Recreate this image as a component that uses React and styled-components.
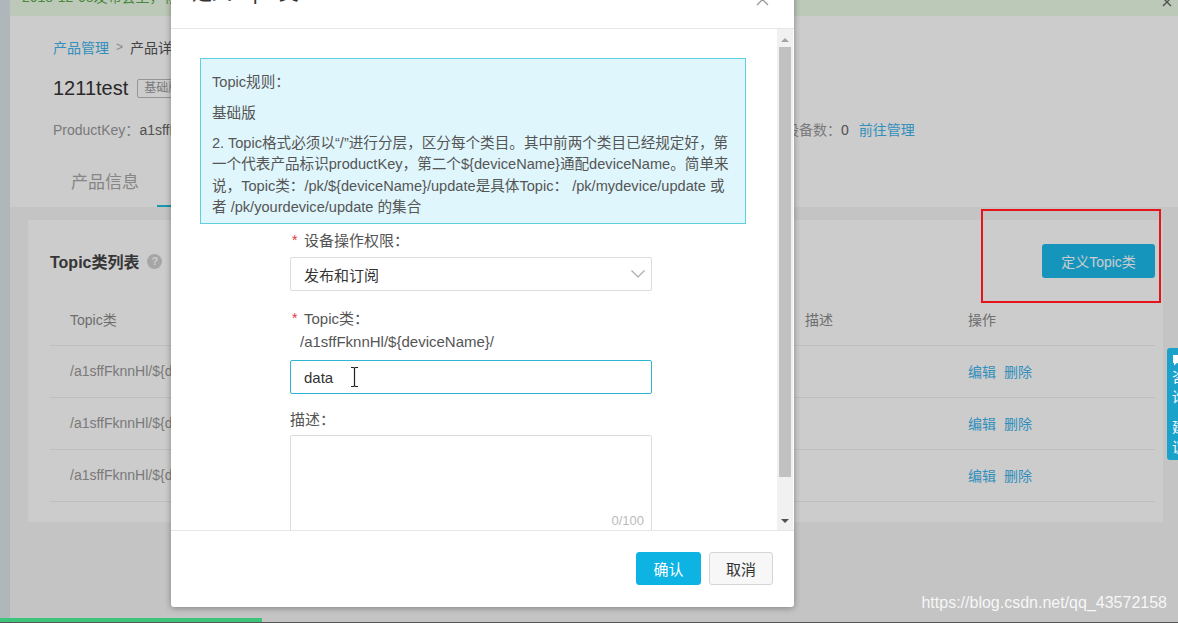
import React from "react";
import styled, { createGlobalStyle } from "styled-components";

const GlobalStyle = createGlobalStyle`
  html, body {
    margin: 0;
    padding: 0;
    height: 100%;
    overflow: hidden;
  }
  body {
    font-family: "Liberation Sans", "Noto Sans CJK SC", sans-serif;
    background: #f5f5f5;
    color: #333;
  }
  #root {
    height: 100%;
  }
  * {
    box-sizing: border-box;
  }
`;

const LINK = "#40b4ec";

/* ---------- page behind the dialog ---------- */

const Screen = styled.div`
  position: relative;
  display: flex;
  height: 100vh;
  overflow: hidden;
`;

const Sidebar = styled.div`
  width: 10px;
  flex: none;
  background: #dde5e9;
`;

const Main = styled.div`
  flex: 1;
  display: flex;
  flex-direction: column;
  min-width: 0;
`;

const Notice = styled.div`
  height: 16px;
  flex: none;
  display: flex;
  align-items: flex-end;
  justify-content: space-between;
  overflow: hidden;
  padding: 0 6px 0 12px;
  background: #ebfbe6;
  color: #5caa4c;
  font-size: 14px;
  span {
    line-height: 20px;
    margin-bottom: 9px;
  }
  svg {
    margin-bottom: 9px;
  }
`;

const Header = styled.div`
  background: #fff;
  padding: 21px 0 0 43px;
`;

const Breadcrumb = styled.div`
  display: flex;
  align-items: center;
  gap: 7px;
  height: 20px;
  font-size: 14px;
  color: #555;
`;

const Crumb = styled.span`
  color: ${({ $link }) => ($link ? LINK : "#555")};
`;

const Sep = styled.span`
  color: #aaa;
  font-size: 12px;
`;

const TitleRow = styled.div`
  display: flex;
  align-items: center;
  height: 28px;
  margin-top: 17px;
`;

const Title = styled.h1`
  margin: 0;
  font-size: 20px;
  font-weight: normal;
  color: #333;
`;

const Tag = styled.span`
  margin-left: 9px;
  height: 19px;
  line-height: 17px;
  padding: 0 6px;
  border: 1px solid #bbb;
  border-radius: 2px;
  color: #999;
  font-size: 12px;
`;

const MetaRow = styled.div`
  display: flex;
  height: 20px;
  margin-top: 18px;
  font-size: 14px;
  line-height: 20px;
`;

const MetaItem = styled.div`
  width: 366px;
  flex: none;
  color: #999;
  white-space: nowrap;
`;

const MetaValue = styled.span`
  color: #666;
`;

const MetaLink = styled.span`
  margin-left: 10px;
  color: ${LINK};
`;

const Tabs = styled.div`
  display: flex;
  height: 52px;
  margin-top: 15px;
`;

const Tab = styled.div`
  padding: 0 18px;
  display: flex;
  align-items: center;
  font-size: 17px;
  color: ${({ $active }) => ($active ? "#00c1de" : "#a8a8a8")};
  border-bottom: 2px solid ${({ $active }) => ($active ? "#1fc0d8" : "transparent")};
`;

const Content = styled.div`
  flex: 1;
  padding: 13px 15px 0 18px;
`;

const Card = styled.div`
  background: #fff;
  padding: 24px 8px 20px 22px;
`;

const CardHead = styled.div`
  display: flex;
  align-items: center;
  justify-content: space-between;
  height: 34px;
`;

const CardTitle = styled.div`
  display: flex;
  align-items: center;
  gap: 8px;
  font-size: 16px;
  font-weight: bold;
  color: #444;
`;

const Help = styled.span`
  width: 15px;
  height: 15px;
  border-radius: 50%;
  background: #d0d0d0;
  color: #fff;
  font-size: 11px;
  line-height: 15px;
  text-align: center;
`;

const PrimaryButton = styled.button`
  width: 113px;
  height: 34px;
  border: none;
  border-radius: 3px;
  background: #1bbbec;
  color: #fff;
  font-family: inherit;
  font-size: 14px;
`;

const Table = styled.div`
  margin-top: 16px;
`;

const Row = styled.div`
  display: grid;
  grid-template-columns: 735px 163px 1fr;
  align-items: center;
  height: 52px;
  padding-bottom: 2px;
  border-bottom: 1px solid #eee;
  font-size: 14px;
  color: ${({ $head }) => ($head ? "#8a8a8a" : "#999")};
`;

const Cell = styled.div`
  padding-left: 20px;
  white-space: nowrap;
  overflow: hidden;
`;

const Ops = styled.div`
  display: flex;
  gap: 8px;
  padding-left: 20px;
  color: ${LINK};
`;

const Mask = styled.div`
  position: absolute;
  inset: 0;
  background: rgba(0, 0, 0, 0.2);
`;

/* ---------- dialog ---------- */

const Modal = styled.div`
  position: absolute;
  left: 171px;
  top: -22px;
  width: 623px;
  background: #fff;
  border-radius: 3px;
  box-shadow: 0 1px 6px rgba(0, 0, 0, 0.35);
  color: #555;
  font-size: 15px;
`;

const ModalHead = styled.div`
  display: flex;
  justify-content: space-between;
  align-items: flex-start;
  height: 51px;
  padding: 0 25px 0 21px;
  border-bottom: 1px solid #e6e6e6;
`;

const ModalTitle = styled.div`
  margin-top: 1px;
  font-size: 20px;
  line-height: 28px;
  color: #333;
`;

const Close = styled.svg`
  margin-top: 15px;
`;

const ModalBody = styled.div`
  display: flex;
  height: 501px;
`;

const BodyScroll = styled.div`
  flex: 1;
  overflow: hidden;
  padding: 29px 31px 0 29px;
`;

const InfoBox = styled.div`
  border: 1px solid #5dcfe0;
  background: #dff6fc;
  padding: 13px 11px 5px;
  color: #555;
  font-size: 14.6px;
  line-height: 21px;
  p {
    margin: 0 0 10px;
    white-space: nowrap;
  }
  p:nth-child(2) {
    margin-bottom: 9px;
  }
  p:last-child {
    margin: 0;
    line-height: 21.3px;
  }
`;

const ScrollBar = styled.div`
  width: 16px;
  flex: none;
  display: flex;
  flex-direction: column;
  align-items: center;
  background: #f1f1f1;
  margin-right: 1px;
`;

const ArrowBox = styled.div`
  height: 18px;
  flex: none;
  display: flex;
  justify-content: center;
  align-items: ${({ $down }) => ($down ? "flex-end" : "flex-start")};
  padding: ${({ $down }) => ($down ? "0 0 7px" : "9px 0 0")};
  &::after {
    content: "";
    border-left: 4px solid transparent;
    border-right: 4px solid transparent;
    ${({ $down }) =>
      $down ? "border-top: 4px solid #505050;" : "border-bottom: 4px solid #a3a3a3;"}
  }
`;

const Thumb = styled.div`
  width: 12px;
  height: 430px;
  background: #c1c1c1;
`;

const Filler = styled.div`
  flex: 1;
`;

const Form = styled.div`
  width: 362px;
  margin: 6px 0 0 90px;
`;

const FormItem = styled.div`
  margin-bottom: ${({ $mb }) => $mb}px;
`;

const Label = styled.div`
  display: flex;
  line-height: 21px;
  margin-bottom: ${({ $mb }) => $mb}px;
  color: #555;
`;

const Star = styled.span`
  width: 14px;
  padding-left: 2px;
  color: #e5343b;
  font-size: 14px;
`;

const SelectBox = styled.div`
  display: flex;
  align-items: center;
  justify-content: space-between;
  height: 34px;
  padding: 0 5px 0 13px;
  border: 1px solid #dcdcdc;
  border-radius: 2px;
  color: #333;
`;

const PathText = styled.div`
  margin: 2px 0 0 10px;
  line-height: 21px;
  color: #555;
`;

const InputWrap = styled.div`
  position: relative;
  margin-top: 8px;
`;

const Input = styled.input`
  display: block;
  width: 100%;
  height: 34px;
  padding: 0 13px;
  border: 1px solid #2db7d5;
  border-radius: 2px;
  outline: none;
  font-family: inherit;
  font-size: 15px;
  color: #333;
`;

const Caret = styled.svg`
  position: absolute;
  left: 60px;
  top: 6px;
`;

const AreaWrap = styled.div`
  position: relative;
`;

const TextArea = styled.textarea`
  display: block;
  width: 100%;
  height: 100px;
  border: 1px solid #dcdcdc;
  border-radius: 2px;
  resize: none;
  outline: none;
`;

const Counter = styled.span`
  position: absolute;
  right: 8px;
  bottom: 7px;
  font-size: 13px;
  color: #bbb;
`;

const ModalFoot = styled.div`
  display: flex;
  justify-content: flex-end;
  gap: 8px;
  padding: 21px 21px 22px;
  border-top: 1px solid #e6e6e6;
`;

const DialogButton = styled.button`
  width: ${({ $w }) => $w}px;
  height: 33px;
  border-radius: 3px;
  font-family: inherit;
  font-size: 15px;
  border: 1px solid ${({ $primary }) => ($primary ? "#0cb3e3" : "#d5d5d5")};
  background: ${({ $primary }) => ($primary ? "#0cb3e3" : "#f7f7f7")};
  color: ${({ $primary }) => ($primary ? "#fff" : "#333")};
`;

/* ---------- things laid over the capture ---------- */

const Annotation = styled.div`
  position: absolute;
  left: 981px;
  top: 209px;
  width: 180px;
  height: 94px;
  border: 2px solid #e5141b;
`;

const FloatTab = styled.div`
  position: absolute;
  left: 1167px;
  top: 348px;
  width: 30px;
  height: 112px;
  padding: 6px 0 0 5px;
  display: flex;
  flex-direction: column;
  gap: 2px;
  border-radius: 3px 0 0 3px;
  background: #1ba2cb;
  color: #fff;
  font-size: 14px;
  line-height: 18px;
  span:nth-of-type(3) {
    margin-top: 10px;
  }
`;

const Watermark = styled.div`
  position: absolute;
  right: 11px;
  top: 593px;
  font-size: 16px;
  line-height: 20px;
  color: rgba(255, 255, 255, 0.88);
`;

const Player = styled.div`
  position: absolute;
  left: 0;
  right: 0;
  bottom: 0;
`;

const Progress = styled.div`
  width: 262px;
  height: 4px;
  background: #3ec47a;
`;

const BaseLine = styled.div`
  height: 1px;
  background: #555;
`;

const info = [
  "2. Topic格式必须以“/”进行分层，区分每个类目。其中前两个类目已经规定好，第",
  "一个代表产品标识productKey，第二个${deviceName}通配deviceName。简单来",
  "说，Topic类：/pk/${deviceName}/update是具体Topic： /pk/mydevice/update 或",
  "者 /pk/yourdevice/update 的集合"
];

const rows = [
  "/a1sffFknnHl/${deviceName}/user/update",
  "/a1sffFknnHl/${deviceName}/user/update/error",
  "/a1sffFknnHl/${deviceName}/user/get"
];

const App = () => (
  <Screen>
    <GlobalStyle />
    <Sidebar />
    <Main>
      <Notice>
        <span>2018-12-08发布会上，物联网平台全新升级，欢迎体验</span>
        <svg width="10" height="10" viewBox="0 0 10 10">
          <path d="M1 1L9 9M9 1L1 9" stroke="#666" strokeWidth="1.4" />
        </svg>
      </Notice>
      <Header>
        <Breadcrumb>
          <Crumb $link>产品管理</Crumb>
          <Sep>&gt;</Sep>
          <Crumb>产品详情</Crumb>
        </Breadcrumb>
        <TitleRow>
          <Title>1211test</Title>
          <Tag>基础版</Tag>
        </TitleRow>
        <MetaRow>
          <MetaItem>
            ProductKey：<MetaValue>a1sffFknnHl</MetaValue>
            <MetaLink>复制</MetaLink>
          </MetaItem>
          <MetaItem>
            ProductSecret：<MetaValue>********</MetaValue>
            <MetaLink>查看</MetaLink>
          </MetaItem>
          <MetaItem>
            设备数：<MetaValue>0</MetaValue>
            <MetaLink>前往管理</MetaLink>
          </MetaItem>
        </MetaRow>
        <Tabs>
          <Tab>产品信息</Tab>
          <Tab $active>Topic类列表</Tab>
          <Tab>功能定义</Tab>
          <Tab>服务端订阅</Tab>
        </Tabs>
      </Header>
      <Content>
        <Card>
          <CardHead>
            <CardTitle>
              Topic类列表
              <Help>?</Help>
            </CardTitle>
            <PrimaryButton>定义Topic类</PrimaryButton>
          </CardHead>
          <Table>
            <Row $head>
              <Cell>Topic类</Cell>
              <Cell>描述</Cell>
              <Cell>操作</Cell>
            </Row>
            {rows.map(r => (
              <Row key={r}>
                <Cell>{r}</Cell>
                <Cell />
                <Ops>
                  <span>编辑</span>
                  <span>删除</span>
                </Ops>
              </Row>
            ))}
          </Table>
        </Card>
      </Content>
    </Main>

    <Mask />

    <Modal>
      <ModalHead>
        <ModalTitle>定义Topic类</ModalTitle>
        <Close width="13" height="13" viewBox="0 0 13 13">
          <path d="M1 1L12 12M12 1L1 12" stroke="#999" strokeWidth="1.3" fill="none" />
        </Close>
      </ModalHead>
      <ModalBody>
        <BodyScroll>
          <InfoBox>
            <p>Topic规则：</p>
            <p>基础版</p>
            <p>
              {info.map(line => (
                <React.Fragment key={line}>
                  {line}
                  <br />
                </React.Fragment>
              ))}
            </p>
          </InfoBox>
          <Form>
            <FormItem $mb={17}>
              <Label $mb={6}>
                <Star>*</Star>设备操作权限：
              </Label>
              <SelectBox>
                发布和订阅
                <svg width="16" height="10" viewBox="0 0 16 10">
                  <path d="M1.5 1.5L8 8L14.5 1.5" stroke="#aaa" strokeWidth="1.2" fill="none" />
                </svg>
              </SelectBox>
            </FormItem>
            <FormItem $mb={15}>
              <Label $mb={0}>
                <Star>*</Star>Topic类：
              </Label>
              <PathText>/a1sffFknnHl/${"{deviceName}"}/</PathText>
              <InputWrap>
                <Input value="data" readOnly />
                <Caret width="9" height="22" viewBox="0 0 9 22">
                  <path
                    d="M1 1.5H3.5Q4.5 1.5 4.5 3V19Q4.5 20.5 3.5 20.5H1M8 1.5H5.5Q4.5 1.5 4.5 3M4.5 19Q4.5 20.5 5.5 20.5H8"
                    stroke="#222"
                    strokeWidth="1.2"
                    fill="none"
                  />
                </Caret>
              </InputWrap>
            </FormItem>
            <FormItem $mb={0}>
              <Label $mb={5}>描述：</Label>
              <AreaWrap>
                <TextArea readOnly />
                <Counter>0/100</Counter>
              </AreaWrap>
            </FormItem>
          </Form>
        </BodyScroll>
        <ScrollBar>
          <ArrowBox />
          <Thumb />
          <Filler />
          <ArrowBox $down />
        </ScrollBar>
      </ModalBody>
      <ModalFoot>
        <DialogButton $primary $w={65}>
          确认
        </DialogButton>
        <DialogButton $w={64}>取消</DialogButton>
      </ModalFoot>
    </Modal>

    <Annotation />
    <FloatTab>
      <svg width="14" height="12" viewBox="0 0 14 12">
        <path d="M1 1H13V9H5L2 11.5V9H1Z" fill="#fff" />
      </svg>
      <span>咨</span>
      <span>询</span>
      <span>建</span>
      <span>议</span>
    </FloatTab>
    <Watermark>https://blog.csdn.net/qq_43572158</Watermark>
    <Player>
      <Progress />
      <BaseLine />
    </Player>
  </Screen>
);

export default App;
